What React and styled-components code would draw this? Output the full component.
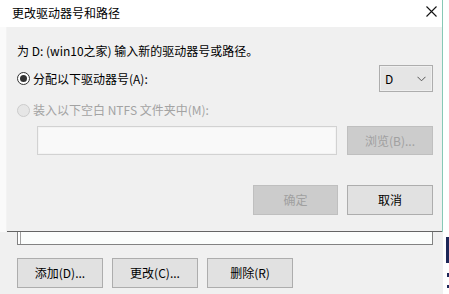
import React from "react";
import styled, { createGlobalStyle } from "styled-components";

const GlobalStyle = createGlobalStyle`
  html, body {
    margin: 0;
    padding: 0;
    background: #ffffff;
    overflow: hidden;
  }
  body {
    font-family: "Noto Sans CJK SC", "Noto Sans", "Liberation Sans", sans-serif;
    font-size: 12px;
    color: #000;
  }
  * { box-sizing: border-box; }
`;

const Screen = styled.div`
  display: flex;
  width: 449px;
  height: 294px;
  background: #ffffff;
`;

const MainColumn = styled.div`
  width: 443px;
  display: flex;
  flex-direction: column;
`;

const Dialog = styled.div`
  height: 232px;
  display: flex;
  flex-direction: column;
  border-right: 1px solid #86c9b6;
`;

const TitleBar = styled.div`
  height: 27px;
  flex: none;
  background: #ffffff;
  display: flex;
  align-items: center;
  justify-content: space-between;
  padding: 0 5px 2px 12px;
`;

const TitleText = styled.span`
  font-size: 12px;
  line-height: 16px;
  color: #000;
`;

const CloseIcon = styled.svg`
  width: 11px;
  height: 11px;
  display: block;
  margin-top: -2px;
`;

const DialogBody = styled.div`
  flex: 1;
  display: flex;
`;

const LeftEdge = styled.div`
  width: 7px;
  background: #fafafa;
  border-right: 1px solid #f3f3f3;
`;

const Content = styled.div`
  flex: 1;
  background: #f0f0f0;
  border-bottom: 1px solid #646464;
  padding: 16px 9px 0 10px;
  display: flex;
  flex-direction: column;
`;

const Text = styled.div`
  line-height: 16px;
  height: 16px;
  white-space: nowrap;
  color: ${(p) => (p.$disabled ? "#a3a3a3" : "#000")};
`;

const Row = styled.div`
  display: flex;
  align-items: center;
  justify-content: ${(p) => p.$justify || "flex-start"};
  gap: ${(p) => p.$gap || 0}px;
  margin-top: ${(p) => p.$mt || 0}px;
  padding-left: ${(p) => p.$pl || 0}px;
  height: ${(p) => p.$h}px;
`;

const RadioLabel = styled.label`
  display: flex;
  align-items: center;
  gap: 3px;
  color: ${(p) => (p.$disabled ? "#a3a3a3" : "#000")};
  line-height: 16px;
  white-space: nowrap;
`;

const RadioCircle = styled.span`
  width: 13px;
  height: 13px;
  border-radius: 50%;
  border: 1px solid ${(p) => (p.$disabled ? "#cccccc" : "#333333")};
  background: ${(p) => (p.$disabled ? "#e6e6e6" : "#ffffff")};
  display: flex;
  align-items: center;
  justify-content: center;
  flex: none;
  &::after {
    content: "";
    width: 7px;
    height: 7px;
    border-radius: 50%;
    background: #333333;
    display: ${(p) => (p.$checked ? "block" : "none")};
  }
`;

const Select = styled.div`
  width: 54px;
  height: 27px;
  border: 1px solid #adadad;
  background: #e5e5e5;
  box-shadow: inset 0 0 0 1px #efefef;
  display: flex;
  align-items: center;
  justify-content: space-between;
  padding: 0 6px 0 5px;
  line-height: 16px;
`;

const Chevron = styled.svg`
  width: 9px;
  height: 6px;
  display: block;
`;

const TextBox = styled.div`
  width: 300px;
  height: 29px;
  border: 1px solid #d2d2d2;
  background: #f9f9f9;
  box-shadow: inset 0 0 0 1px #f3f3f3;
`;

const Button = styled.button`
  width: ${(p) => p.$w || 86}px;
  height: ${(p) => p.$h || 29}px;
  font-family: inherit;
  font-size: 12px;
  line-height: 16px;
  padding: 0;
  margin: 0;
  border: 1px solid ${(p) => (p.disabled ? "#bfbfbf" : "#adadad")};
  background: ${(p) => (p.disabled ? "#cccccc" : "#e1e1e1")};
  color: ${(p) => (p.disabled ? "#a0a0a0" : "#000000")};
  display: flex;
  align-items: center;
  justify-content: center;
  flex: none;
`;

const Underlay = styled.div`
  flex: 1;
  background: #f0f0f0;
  display: flex;
  flex-direction: column;
`;

const ListBox = styled.div`
  margin-left: 17px;
  width: 416px;
  height: 13px;
  border: 1px solid #828282;
  border-top: none;
  background: #fbfdfc;
  box-shadow: inset 2px 0 0 #ffffff, inset 3px 0 0 #a0a0a0;
`;

const RightStrip = styled.div`
  width: 6px;
  background: #ffffff;
  display: flex;
  flex-direction: column;
  align-items: flex-end;
`;

const NavyMark = styled.div`
  width: ${(p) => p.$w}px;
  height: ${(p) => p.$h}px;
  margin-top: ${(p) => p.$mt}px;
  background: #1e2758;
`;

export default function App() {
  return (
    <>
      <GlobalStyle />
      <Screen>
        <MainColumn>
          <Dialog>
            <TitleBar>
              <TitleText>更改驱动器号和路径</TitleText>
              <CloseIcon viewBox="0 0 11 11">
                <path d="M0.5 0.5 L10.5 10.5 M10.5 0.5 L0.5 10.5" stroke="#111" strokeWidth="1.1" fill="none" />
              </CloseIcon>
            </TitleBar>
            <DialogBody>
              <LeftEdge />
              <Content>
                <Text>为 D: (win10之家) 输入新的驱动器号或路径。</Text>
                <Row $mt={6} $h={27} $justify="space-between">
                  <RadioLabel>
                    <RadioCircle $checked />
                    分配以下驱动器号(A):
                  </RadioLabel>
                  <Select>
                    <span>D</span>
                    <Chevron viewBox="0 0 9 6">
                      <path d="M0.5 0.8 L4.5 4.8 L8.5 0.8" stroke="#555" strokeWidth="1" fill="none" />
                    </Chevron>
                  </Select>
                </Row>
                <Row $mt={10} $h={16}>
                  <RadioLabel $disabled>
                    <RadioCircle $disabled />
                    装入以下空白 NTFS 文件夹中(M):
                  </RadioLabel>
                </Row>
                <Row $mt={8} $h={29} $pl={20} $gap={10}>
                  <TextBox />
                  <Button disabled $h={29}>浏览(B)...</Button>
                </Row>
                <Row $mt={30} $h={30} $justify="flex-end" $gap={9}>
                  <Button disabled $w={85} $h={30}>确定</Button>
                  <Button $h={30}>取消</Button>
                </Row>
              </Content>
            </DialogBody>
          </Dialog>
          <Underlay>
            <ListBox />
            <Row $mt={13} $h={30} $pl={17} $gap={9}>
              <Button $h={30}>添加(D)...</Button>
              <Button $h={30}>更改(C)...</Button>
              <Button $h={30}>删除(R)</Button>
            </Row>
          </Underlay>
        </MainColumn>
        <RightStrip>
          <NavyMark $w={3} $h={26} $mt={237} />
          <NavyMark $w={2} $h={4} $mt={10} />
          <NavyMark $w={2} $h={3} $mt={8} />
        </RightStrip>
      </Screen>
    </>
  );
}
